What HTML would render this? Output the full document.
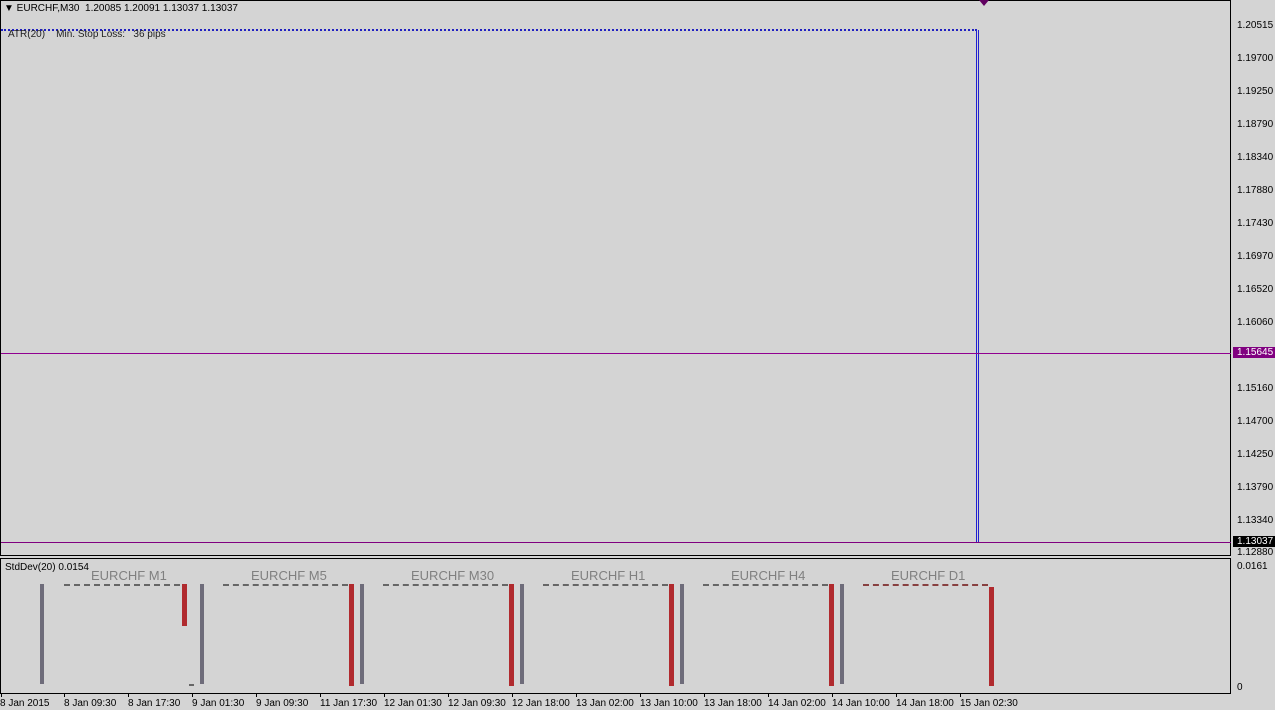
<!DOCTYPE html><html><head><style>
body{margin:0;width:1275px;height:710px;background:#d4d4d4;position:relative;overflow:hidden;font-family:"Liberation Sans",sans-serif;font-size:10px;color:#000}
.a{position:absolute}
.pl{position:absolute;left:1237px;font-size:10px;line-height:11px}
.dl{position:absolute;top:698px;font-size:10px;white-space:nowrap}
.tk{position:absolute;top:693px;width:1px;height:4px;background:#000}
.g{position:absolute;width:4px;background:#6e6c7a}
.r{position:absolute;width:5px;background:#b02a2e}
.d{position:absolute;height:0;border-top:2px dashed #666;top:584px}
.t{position:absolute;top:568px;font-size:13px;color:#808080}
</style></head><body>
<div class="a" style="left:0;top:0;width:1231px;height:556px;border:1px solid #000;box-sizing:border-box"></div>
<div class="a" style="left:0;top:558px;width:1231px;height:136px;border:1px solid #000;box-sizing:border-box"></div>
<div class="a" style="left:4px;top:3px;font-size:10px">▼ EURCHF,M30&nbsp; 1.20085 1.20091 1.13037 1.13037</div>
<div class="a" style="left:1px;top:29px;width:976px;border-top:2px dotted #2020c0"></div>
<div class="a" style="left:8px;top:29px;color:#222">ATR(20)&nbsp;&nbsp;&nbsp; Min. Stop Loss:&nbsp;&nbsp; 36 pips</div>
<div class="a" style="left:976px;top:30px;width:1px;height:512px;background:#2020d0"></div>
<div class="a" style="left:978px;top:30px;width:1px;height:512px;background:#2020d0"></div>
<div class="a" style="left:1px;top:353px;width:1230px;height:1px;background:#900090"></div>
<div class="a" style="left:1px;top:542px;width:1230px;height:1px;background:#800080"></div>
<div class="a" style="left:979px;top:0;width:0;height:0;border-left:5px solid transparent;border-right:5px solid transparent;border-top:6px solid #600060"></div>
<div class="pl" style="top:20px">1.20515</div><div class="pl" style="top:53px">1.19700</div><div class="pl" style="top:86px">1.19250</div><div class="pl" style="top:119px">1.18790</div><div class="pl" style="top:152px">1.18340</div><div class="pl" style="top:185px">1.17880</div><div class="pl" style="top:218px">1.17430</div><div class="pl" style="top:251px">1.16970</div><div class="pl" style="top:284px">1.16520</div><div class="pl" style="top:317px">1.16060</div>
<div class="pl" style="top:347px;left:1233px;background:#800080;color:#fff;padding:0 4px">1.15645</div>
<div class="pl" style="top:383px">1.15160</div><div class="pl" style="top:416px">1.14700</div><div class="pl" style="top:449px">1.14250</div><div class="pl" style="top:482px">1.13790</div><div class="pl" style="top:515px">1.13340</div>
<div class="pl" style="top:536px;left:1233px;background:#000;color:#fff;padding:0 4px">1.13037</div>
<div class="pl" style="top:547px">1.12880</div>
<div class="pl" style="top:561px">0.0161</div><div class="pl" style="top:682px">0</div>
<div class="a" style="left:5px;top:562px">StdDev(20) 0.0154</div>
<div class="t" style="left:91px">EURCHF M1</div><div class="t" style="left:251px">EURCHF M5</div><div class="t" style="left:411px">EURCHF M30</div><div class="t" style="left:571px">EURCHF H1</div><div class="t" style="left:731px">EURCHF H4</div><div class="t" style="left:891px">EURCHF D1</div>
<div class="d" style="left:64px;width:116px"></div><div class="d" style="left:223px;width:125px"></div><div class="d" style="left:383px;width:125px"></div><div class="d" style="left:543px;width:125px"></div><div class="d" style="left:703px;width:125px"></div><div class="d" style="left:863px;width:125px;border-color:#884040"></div>
<div class="g" style="left:40px;top:584px;height:100px"></div>
<div class="r" style="left:182px;top:584px;height:42px"></div>
<div class="a" style="left:189px;top:684px;width:5px;height:2px;background:#666"></div>
<div class="g" style="left:200px;top:584px;height:100px"></div>
<div class="r" style="left:349px;top:584px;height:102px"></div><div class="g" style="left:360px;top:584px;height:100px"></div>
<div class="r" style="left:509px;top:584px;height:102px"></div><div class="g" style="left:520px;top:584px;height:100px"></div>
<div class="r" style="left:669px;top:584px;height:102px"></div><div class="g" style="left:680px;top:584px;height:100px"></div>
<div class="r" style="left:829px;top:584px;height:102px"></div><div class="g" style="left:840px;top:584px;height:100px"></div>
<div class="r" style="left:989px;top:587px;height:99px"></div>
<div class="dl" style="left:0">8 Jan 2015</div><div class="dl" style="left:64px">8 Jan 09:30</div><div class="dl" style="left:128px">8 Jan 17:30</div><div class="dl" style="left:192px">9 Jan 01:30</div><div class="dl" style="left:256px">9 Jan 09:30</div><div class="dl" style="left:320px">11 Jan 17:30</div><div class="dl" style="left:384px">12 Jan 01:30</div><div class="dl" style="left:448px">12 Jan 09:30</div><div class="dl" style="left:512px">12 Jan 18:00</div><div class="dl" style="left:576px">13 Jan 02:00</div><div class="dl" style="left:640px">13 Jan 10:00</div><div class="dl" style="left:704px">13 Jan 18:00</div><div class="dl" style="left:768px">14 Jan 02:00</div><div class="dl" style="left:832px">14 Jan 10:00</div><div class="dl" style="left:896px">14 Jan 18:00</div><div class="dl" style="left:960px">15 Jan 02:30</div>
<div class="tk" style="left:1px"></div><div class="tk" style="left:64px"></div><div class="tk" style="left:128px"></div><div class="tk" style="left:192px"></div><div class="tk" style="left:256px"></div><div class="tk" style="left:320px"></div><div class="tk" style="left:384px"></div><div class="tk" style="left:448px"></div><div class="tk" style="left:512px"></div><div class="tk" style="left:576px"></div><div class="tk" style="left:640px"></div><div class="tk" style="left:704px"></div><div class="tk" style="left:768px"></div><div class="tk" style="left:832px"></div><div class="tk" style="left:896px"></div><div class="tk" style="left:960px"></div>
</body></html>
